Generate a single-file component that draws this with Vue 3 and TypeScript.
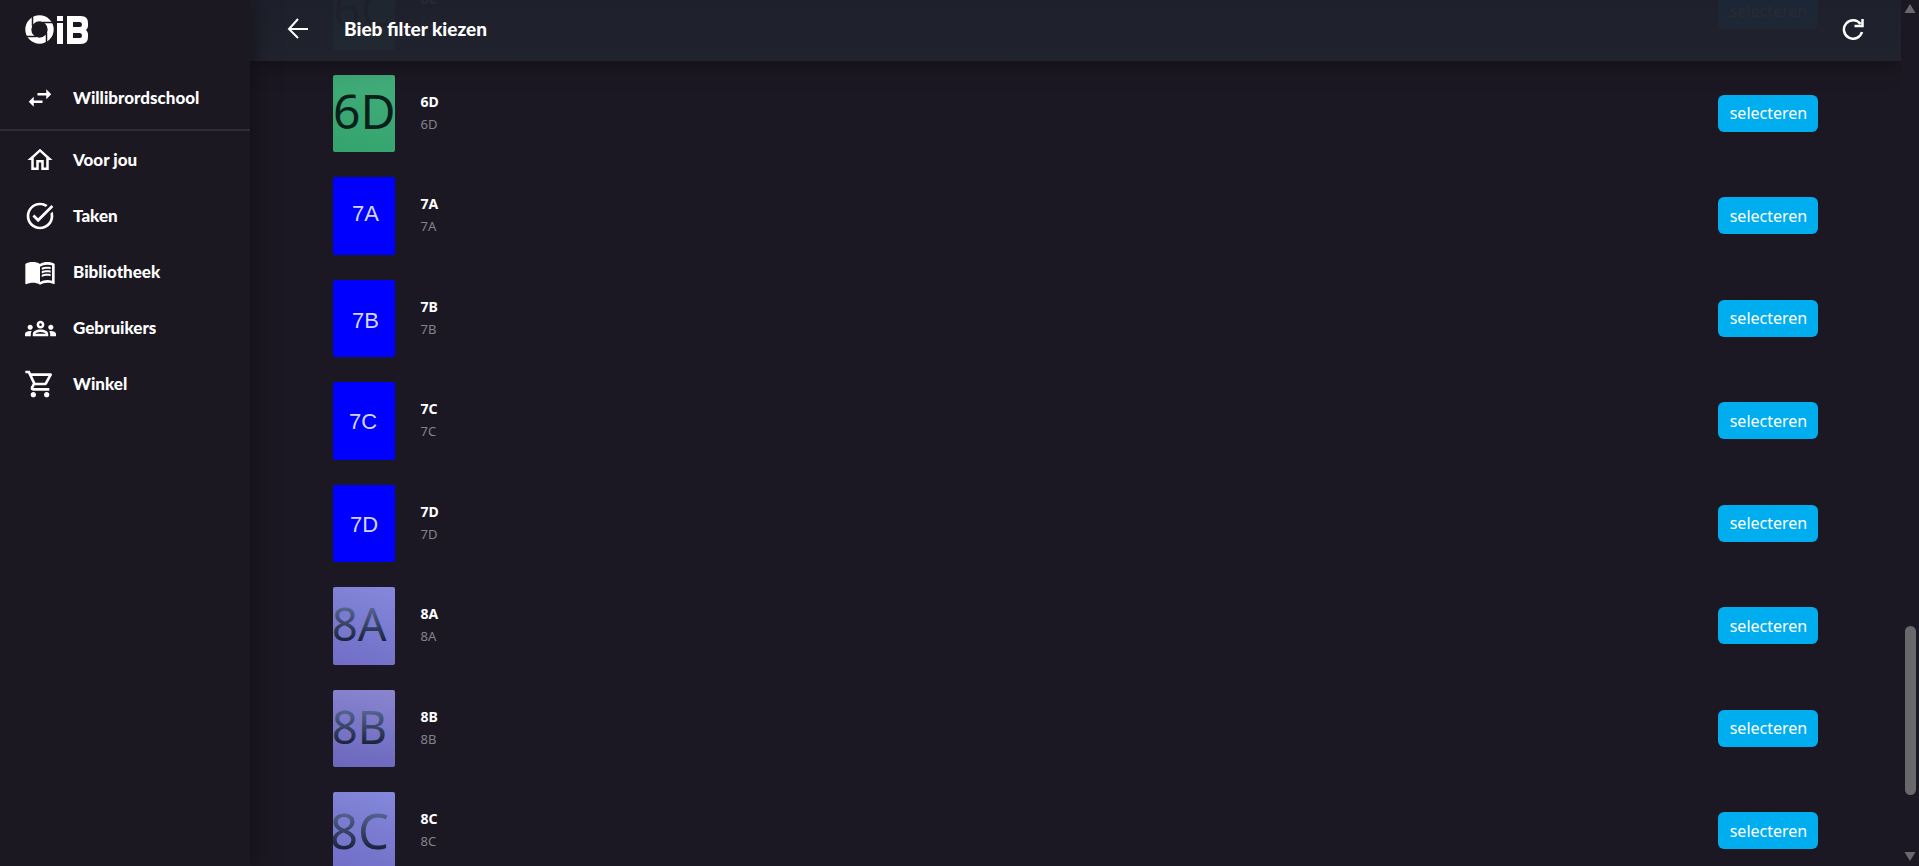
<script setup lang="ts">
interface NavItem {
  label: string
  icon: string
  size: number
}

interface Filter {
  name: string
  tone: 'green' | 'blue' | 'violet' | 'mauve'
  x: number
  y: number
  size: number
}

const navItems: NavItem[] = [
  { label: 'Voor jou', size: 30, icon: 'M12 5.69l5 4.5V18h-2v-6H9v6H7v-7.81l5-4.5M12 3L2 12h3v8h6v-6h2v6h6v-8h3L12 3z' },
  { label: 'Taken', size: 32, icon: 'M22 5.18 10.59 16.6l-4.24-4.24 1.41-1.41 2.83 2.83 10-10L22 5.18zm-2.21 5.04c.13.57.21 1.17.21 1.78 0 4.42-3.58 8-8 8s-8-3.58-8-8 3.58-8 8-8c1.58 0 3.04.46 4.28 1.25l1.44-1.44A9.9 9.9 0 0 0 12 2C6.48 2 2 6.48 2 12s4.48 10 10 10 10-4.48 10-10c0-1.19-.22-2.33-.6-3.39l-1.61 1.61z' },
  { label: 'Bibliotheek', size: 32, icon: 'M17.5 4.5c-1.95 0-4.05.4-5.5 1.5-1.45-1.1-3.55-1.5-5.5-1.5S2.45 4.9 1 6v14.65c0 .65.73.45.75.45C3.1 20.45 5.05 20 6.5 20c1.95 0 4.05.4 5.5 1.5 1.35-.85 3.8-1.5 5.5-1.5 1.65 0 3.35.3 4.75 1.05.41.21.75-.19.75-.45V6c-1.49-1.12-3.63-1.5-5.5-1.5zM21 18.5c-1.1-.35-2.3-.5-3.5-.5-1.7 0-4.15.65-5.5 1.5V8c1.35-.85 3.8-1.5 5.5-1.5 1.2 0 2.4.15 3.5.5v11.5zM17.5 8c-1.7 0-3 .3-4.2.8v1.6c1.2-.5 2.7-.9 4.2-.9.9 0 1.7.1 2.5.3V8.2C19.2 8.1 18.4 8 17.5 8zm0 2.7c-1.7 0-3.2.3-4.2.8v1.6c1.2-.6 2.7-.9 4.2-.9.9 0 1.7.1 2.5.3v-1.6c-.8-.1-1.6-.2-2.5-.2zm0 2.7c-1.7 0-3.2.3-4.2.8v1.6c1.2-.6 2.7-.9 4.2-.9.9 0 1.7.1 2.5.3v-1.6c-.8-.1-1.6-.2-2.5-.2z' },
  { label: 'Gebruikers', size: 31, icon: 'M4 13c1.1 0 2-.9 2-2s-.9-2-2-2-2 .9-2 2 .9 2 2 2zm1.13 1.1C4.76 14.04 4.39 14 4 14c-.99 0-1.93.21-2.78.58C.48 14.9 0 15.62 0 16.43V18h4.5v-1.61c0-.83.23-1.61.63-2.29zM20 13c1.1 0 2-.9 2-2s-.9-2-2-2-2 .9-2 2 .9 2 2 2zm4 3.43c0-.81-.48-1.53-1.22-1.85A6.95 6.95 0 0 0 20 14c-.39 0-.76.04-1.13.1.4.68.63 1.46.63 2.29V18H24v-1.57zm-7.76-2.78C15.07 13.13 13.63 12.75 12 12.75s-3.07.39-4.24.9C6.68 14.13 6 15.21 6 16.39V18h12v-1.61c0-1.18-.68-2.26-1.76-2.74zM8.07 16c.09-.23.13-.39.91-.69.97-.38 1.99-.56 3.02-.56s2.05.18 3.02.56c.77.3.81.46.91.69H8.07zM12 8c.55 0 1 .45 1 1s-.45 1-1 1-1-.45-1-1 .45-1 1-1m0-2c-1.66 0-3 1.34-3 3s1.34 3 3 3 3-1.34 3-3-1.34-3-3-3z' },
  { label: 'Winkel', size: 32, icon: 'M15.55 13c.75 0 1.41-.41 1.75-1.03l3.58-6.49A.996.996 0 0 0 20.01 4H5.21l-.94-2H1v2h2l3.6 7.59-1.35 2.44C4.52 15.37 5.48 17 7 17h12v-2H7l1.1-2h7.45zM6.16 6h12.15l-2.76 5H8.53L6.16 6zM7 18c-1.1 0-1.99.9-1.99 2S5.9 22 7 22s2-.9 2-2-.9-2-2-2zm10 0c-1.1 0-1.99.9-1.99 2s.89 2 1.99 2 2-.9 2-2-.9-2-2-2z' },
]

const filters: Filter[] = [
  { name: '6C', tone: 'green', x: 0, y: 55, size: 48 },
  { name: '6D', tone: 'green', x: 0, y: 54, size: 48 },
  { name: '7A', tone: 'blue', x: 19, y: 44, size: 22 },
  { name: '7B', tone: 'blue', x: 19, y: 48, size: 22 },
  { name: '7C', tone: 'blue', x: 16, y: 47, size: 22 },
  { name: '7D', tone: 'blue', x: 17, y: 47, size: 22 },
  { name: '8A', tone: 'violet', x: -1, y: 54, size: 45 },
  { name: '8B', tone: 'mauve', x: -1, y: 54, size: 45 },
  { name: '8C', tone: 'violet', x: -3, y: 57, size: 49 },
]
</script>

<template>
  <div class="shell">
    <aside class="sidebar">
      <a class="logo" href="#" aria-label="OiB">
        <svg width="64" height="30" viewBox="0 0 64 30" fill="#fff">
          <circle cx="14.5" cy="14.5" r="11.2" fill="none" stroke="#fff" stroke-width="6" />
          <path d="M7.500 1V11M28 7.500H18M21.500 28V18M1 21.500H11" fill="none" stroke="#1b1822" stroke-width="1.5" />
          <path d="M32 1h6v5h-6zM32 8h6v21h-6z" />
          <path fill-rule="evenodd" d="M42 1h14q7 0 7 7v3q0 2-2 4q2 2 2 4v3q0 7-7 7H42zM48 7v5h7q2 0 2-2.5T55 7zM48 18v5h7q2 0 2-2.5T55 18z" />
        </svg>
      </a>
      <button class="nav-row school" type="button">
        <span class="nav-icon"><svg width="30" height="30" viewBox="0 0 24 24"><path d="M6.99 11L3 15l3.99 4v-3H14v-2H6.99v-3zM21 9l-3.99-4v3H10v2h7.01v3L21 9z" /></svg></span>
        Willibrordschool
      </button>
      <nav>
        <a v-for="item in navItems" :key="item.label" class="nav-row" href="#">
          <span class="nav-icon"><svg :width="item.size" :height="item.size" viewBox="0 0 24 24"><path :d="item.icon" /></svg></span>
          {{ item.label }}
        </a>
      </nav>
    </aside>

    <main class="content">
      <header class="topbar">
        <button class="icon-button" type="button" aria-label="Terug">
          <svg width="22" height="22" viewBox="0 0 22 22"><path d="M11 1L2 11l9 9M2 11h19" /></svg>
        </button>
        <h1>Bieb filter kiezen</h1>
        <button class="icon-button refresh" type="button" aria-label="Vernieuwen">
          <svg width="22" height="22" viewBox="0 0 22 22"><path d="M20 14A9.200 9.200 0 1 1 18.500 6M20.500 1v7h-8" /></svg>
        </button>
      </header>
      <ul class="filters">
        <li v-for="filter in filters" :key="filter.name" class="filter">
          <svg class="thumb" :class="filter.tone" aria-hidden="true">
            <defs>
              <linearGradient :id="`ink-${filter.name}`" x1="0" y1="0" x2="0" y2="1">
                <stop offset="0.25" stop-color="#53638f" />
                <stop offset="0.8" stop-color="#19223c" />
              </linearGradient>
            </defs>
            <text
              :x="filter.x"
              :y="filter.y"
              :font-size="filter.size"
              :fill="filter.tone === 'violet' || filter.tone === 'mauve' ? `url(#ink-${filter.name})` : undefined"
            >{{ filter.name }}</text>
          </svg>
          <div class="caption">
            <strong>{{ filter.name }}</strong>
            <span>{{ filter.name }}</span>
          </div>
          <button class="select" type="button">selecteren</button>
        </li>
      </ul>
    </main>

    <div class="scrollbar" aria-hidden="true">
      <svg width="14" height="12" viewBox="0 0 14 12"><path d="M7 1l5.500 9h-11z" /></svg>
      <div class="track"><div class="handle"></div></div>
      <svg width="14" height="12" viewBox="0 0 14 12"><path d="M1.500 1h11L7 10z" /></svg>
    </div>
  </div>
</template>

<style>
body {
  margin: 0;
  background: #1c1823;
}
</style>

<style scoped>
.shell {
  display: grid;
  grid-template-columns: 250px minmax(0, 1fr) 18px;
  height: 100vh;
  overflow: hidden;
  background: #1c1823;
  color: #fff;
  font-family: "Noto Sans", "Open Sans", sans-serif;
}

button {
  border: 0;
  background: none;
  color: inherit;
  font-family: inherit;
  cursor: pointer;
}

svg {
  display: block;
}

.sidebar {
  z-index: 2;
  background: #1b1822;
  box-shadow: 0 0 24px rgba(0, 0, 0, 0.5);
}

.logo {
  display: block;
  padding: 15px 25px 26px;
}

.nav-row {
  display: flex;
  align-items: center;
  box-sizing: border-box;
  width: 100%;
  height: 56px;
  padding: 0 20px;
  gap: 13px;
  color: #fff;
  font: 900 17px/24px Lato, sans-serif;
  text-decoration: none;
}

.nav-icon {
  display: grid;
  place-items: center;
  width: 40px;
  height: 40px;
}

.nav-icon svg {
  fill: #fff;
}

.school {
  height: 60px;
  padding-bottom: 4px;
  border-bottom: 2px solid #302d39;
}

nav {
  padding-top: 1px;
}

.content {
  display: grid;
  grid-template-rows: minmax(0, 1fr);
  overflow: hidden;
}

.topbar {
  grid-area: 1 / 1;
  align-self: start;
  z-index: 1;
  display: flex;
  align-items: center;
  box-sizing: border-box;
  height: 61px;
  padding: 0 30px 4px;
  background: linear-gradient(rgba(30, 32, 44, 0.96), rgba(33, 35, 46, 0.96));
  box-shadow: 0 0 24px rgba(0, 0, 0, 0.5);
}

h1 {
  flex: 1;
  margin: 0 0 0 28px;
  font: 900 19px/24px Lato, sans-serif;
}

.icon-button {
  display: grid;
  place-items: center;
  width: 36px;
  height: 36px;
  padding: 0;
}

.icon-button path {
  fill: none;
  stroke: #fff;
  stroke-width: 2;
}

.refresh path {
  stroke-width: 2.5;
}

.filters {
  grid-area: 1 / 1;
  display: flex;
  flex-direction: column;
  gap: 25px;
  margin: -28px 0 0;
  padding: 0 5%;
  list-style: none;
}

.filter {
  display: flex;
  align-items: center;
}

.thumb {
  flex: none;
  width: 62px;
  aspect-ratio: 4 / 5;
  border-radius: 2px;
  overflow: hidden;
}

.green {
  background: linear-gradient(20deg, #34a36d, #43ae7b);
  fill: #08201a;
}

.blue {
  background: #0000ff;
  fill: #d5d5ff;
  font-family: "Liberation Sans", Arial, sans-serif;
}

.violet {
  background: linear-gradient(200deg, #8488da, #706dc6);
}

.mauve {
  background: linear-gradient(190deg, #8a85cf, #6a67be);
}

.caption {
  display: flex;
  flex: 1;
  flex-direction: column;
  padding: 0 0 4px 26px;
}

.caption strong {
  font-size: 14px;
  line-height: 25px;
}

.caption span {
  color: #84828a;
  font-size: 13px;
  line-height: 20px;
}

.select {
  min-width: 100px;
  height: 37px;
  padding: 0 10px;
  border-radius: 6px;
  background: #00aeef;
  font-size: 16px;
  line-height: 24px;
}

.scrollbar {
  display: flex;
  flex-direction: column;
  align-items: center;
  padding: 3px 0;
}

.scrollbar path {
  fill: #6a6970;
}

.track {
  display: grid;
  flex: 1;
  grid-template-rows: 612fr 170fr 56fr;
}

.handle {
  grid-row: 2;
  width: 11px;
  border-radius: 6px;
  background: #68686d;
}
</style>
